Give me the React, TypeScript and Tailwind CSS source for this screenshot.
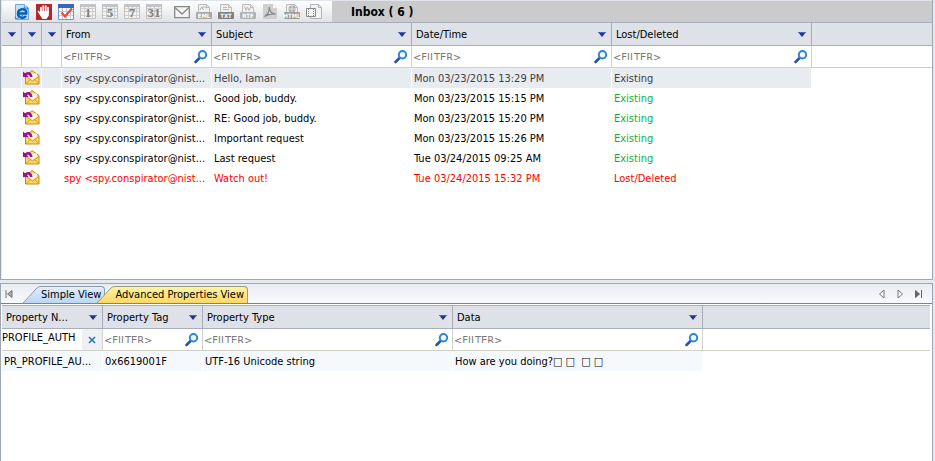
import type { ReactNode } from "react";

type Mail = { subject: string; date: string; status: string; tone: string; selected?: boolean };

const FROM = "spy <spy.conspirator@nist...";

const mails: Mail[] = [
  { subject: "Hello, Iaman", date: "Mon 03/23/2015 13:29 PM", status: "Existing", tone: "text-[#404040]", selected: true },
  { subject: "Good job, buddy.", date: "Mon 03/23/2015 15:15 PM", status: "Existing", tone: "text-[#10b040]" },
  { subject: "RE: Good job, buddy.", date: "Mon 03/23/2015 15:20 PM", status: "Existing", tone: "text-[#10b040]" },
  { subject: "Important request", date: "Mon 03/23/2015 15:26 PM", status: "Existing", tone: "text-[#10b040]" },
  { subject: "Last request", date: "Tue 03/24/2015 09:25 AM", status: "Existing", tone: "text-[#10b040]" },
  { subject: "Watch out!", date: "Tue 03/24/2015 15:32 PM", status: "Lost/Deleted", tone: "text-[#ff0000]" },
];

function Icon({ children }: { children: ReactNode }) {
  return (
    <svg viewBox="0 0 16 16" className="block size-4" aria-hidden="true">
      {children}
    </svg>
  );
}

function Calendar({ day }: { day: string }) {
  return (
    <Icon>
      <path d="M.5.5h15v14H.5z" fill="#f3f3f3" stroke="#c0c0c0" />
      <path d="M1 4.500h14M1 7.500h14M1 11.500h14M4.500 1v14M8.500 1v14M12.500 1v14" stroke="#cfcfcf" />
      <path d="M0 0h16v3H0z" fill="#c4c4c4" />
      <text x="8" y="13" textAnchor="middle" fontSize="13" fontWeight="700" fontFamily="Liberation Serif, serif" fill="#808080">
        {day}
      </text>
    </Icon>
  );
}

function FileIcon({ tag, fill, children }: { tag: string; fill: string; children?: ReactNode }) {
  return (
    <Icon>
      <path d="M2.500 9V.5h8l3 3V9" fill="#f0f0f0" stroke="#bdbdbd" />
      <path d="M10.500.5v3h3" fill="none" stroke="#bdbdbd" />
      {children}
      <rect y="8" width="16" height="7" rx="1" fill={fill} />
      <text x="8" y="14" textAnchor="middle" fontSize="6" fontWeight="700" fontFamily="DejaVu Sans Condensed, sans-serif" fill="#fff">
        {tag}
      </text>
    </Icon>
  );
}

function Tool({ label, children }: { label: string; children: ReactNode }) {
  return (
    <button type="button" aria-label={label} className="size-4">
      {children}
    </button>
  );
}

function Arrow() {
  return (
    <svg viewBox="0 0 8 5" className="block h-[5px] w-2 shrink-0" aria-hidden="true">
      <path d="M0 0h8L4 5z" fill="#26357f" />
      <path d="M0 0h8L7 1H1z" fill="#4a63c4" />
    </svg>
  );
}

function Magnifier() {
  return (
    <svg viewBox="0 0 14 14" className="block size-[14px]" aria-hidden="true">
      <path d="M5.500 8 1.500 12" stroke="#2b50a8" strokeWidth="2.500" strokeLinecap="round" />
      <circle cx="8.500" cy="4.700" r="3.700" fill="#eef8ff" stroke="#2f86cf" strokeWidth="2" />
    </svg>
  );
}

function MailIcon() {
  return (
    <svg viewBox="0 0 17 16" className="block h-4 w-[17px]" aria-hidden="true">
      <path d="M2.500 5.500 9 .7l7 4.800v8.500H2.500z" fill="#fbd766" stroke="#c98a1c" />
      <path d="M5 3.500h9v3.500l-4.500 3L5 7z" fill="#fff8dc" />
      <path d="m3 6.500 6.500 4.500L16 6.500M3 13.500l4.500-4M16 13.500l-4.500-4" fill="none" stroke="#d99a28" />
      <path d="M0 1.500v5.500h5.500L3.700 5C5 3.800 6.500 4.500 7 7h2.500C9.500 2.500 5.500.3 2 3.300z" fill="#a0108c" />
    </svg>
  );
}

function HeadCell({ label, children }: { label: string; children?: ReactNode }) {
  return (
    <th scope="col" className="h-6 border-y border-r border-[#a9aeb8] bg-[#dee1e7] p-0 text-left font-normal">
      <div className={children ? "flex items-center justify-between pr-[5px] pl-1" : "flex items-center justify-center"}>
        {children && <span className="pt-[2px]">{children}</span>}
        <button type="button" aria-label={"Sort by " + label}>
          <Arrow />
        </button>
      </div>
    </th>
  );
}

function FilterCell({ label }: { label: string }) {
  return (
    <td className="h-[22px] border-r border-b border-[#d3d0c8] p-0">
      <div className="flex h-[21px] items-start justify-between pt-1 pr-[3px] pl-px">
        <div className="h-[10px] min-w-0 flex-1 overflow-hidden pt-px">
          <input
            aria-label={"Filter " + label}
            placeholder="<FILTER>"
            className="block h-[14px] w-full bg-transparent p-0 leading-[14px] outline-none placeholder:text-[#777777]"
          />
        </div>
        <button type="button" aria-label={"Search " + label}>
          <Magnifier />
        </button>
      </div>
    </td>
  );
}

const EMPTY_HEAD = "h-6 border-y border-[#a9aeb8] bg-[#dee1e7] p-0";
const EMPTY_FILTER = "h-[22px] border-b border-[#d3d0c8] p-0";

function Toolbar() {
  return (
    <header className="flex h-[21px] items-center bg-linear-to-b from-white to-[#e0e2e7]">
      <div className="flex h-full w-[330px] shrink-0 items-center gap-3 pl-3">
        <div className="flex gap-[6px]">
          <Tool label="Open in browser">
            <Icon>
              <path d="M1.500.5h9l4 4v11h-13z" fill="#c4e0f6" stroke="#6fa8d8" />
              <path d="M10.500.5v4h4" fill="#fff" stroke="#6fa8d8" />
              <path d="M12 12C9.500 15 4 14 4 9.500S10 4 12 7c.5 1 .5 2 .3 2.500H5" fill="none" stroke="#0b5cb5" strokeWidth="2.400" />
              <path d="M1.500 12.500C0 16 5 14.500 9 11M9 4.500C12 2.500 15 2 13.500 5.500" fill="none" stroke="#1a86d8" />
            </Icon>
          </Tool>
          <Tool label="Stop">
            <Icon>
              <path d="M0 0h16v16H0z" fill="#b3282c" />
              <path d="M5 9V3.500M7.300 8V2M9.700 8V2M12 9V3.500M2.500 7.500 5 11" stroke="#fff" strokeWidth="1.700" strokeLinecap="round" />
              <path d="M4.200 7h8.600v4.500L10.500 15h-4l-2.300-3.500z" fill="#fff" />
            </Icon>
          </Tool>
          <Tool label="All dates">
            <Icon>
              <path d="M.5.5h15v15H.5z" fill="#fff" stroke="#7292d0" />
              <path d="M0 0h16v4H0z" fill="#3c66b8" />
              <path d="M1 7.500h14M1 11.500h14M4.500 4v11M8.500 4v11M12.500 4v11" stroke="#b9c9e8" />
              <path d="m3.500 8.500 3.500 4 7-8" fill="none" stroke="#e9502c" strokeWidth="2.400" />
            </Icon>
          </Tool>
          <Tool label="One day"><Calendar day="1" /></Tool>
          <Tool label="Five days"><Calendar day="5" /></Tool>
          <Tool label="Seven days"><Calendar day="7" /></Tool>
          <Tool label="Month"><Calendar day="31" /></Tool>
        </div>
        <div className="flex gap-[6px]">
          <Tool label="Message">
            <Icon>
              <path d="M.7 2.700h14.600v11H.7z" fill="#f4f4f4" stroke="#888" strokeWidth="1.300" />
              <path d="m1 3.500 7 6.500 7-6.500" fill="none" stroke="#888" strokeWidth="1.300" />
            </Icon>
          </Tool>
          <Tool label="Export EML">
            <FileIcon tag="EML" fill="#a9a9a9"><path d="M4 6c1-3 4-4 7-2M5 3l3 3" fill="none" stroke="#b0b0b0" /></FileIcon>
          </Tool>
          <Tool label="Export TXT">
            <FileIcon tag="TXT" fill="#7f7f7f"><path d="M5 3.500h4M5 5.500h6" stroke="#b8b8b8" /></FileIcon>
          </Tool>
          <Tool label="Export RTF">
            <FileIcon tag="RTF" fill="#b2b2b2"><path d="m4.500 2.500 1.500 4L7.500 3 9 6.500l1.500-3" fill="none" stroke="#b8b8b8" /></FileIcon>
          </Tool>
          <Tool label="Export PDF">
            <Icon>
              <path d="M1 0h10l4 4v11H1z" fill="#cfcfcf" />
              <path d="M11 0v4h4z" fill="#f6f6f6" />
              <path d="M2.500 12.500C6 10.500 7.700 7 7.200 3c.3 4 2.500 7 6.300 7-4-.5-8 .5-11 2.500z" fill="#eee" stroke="#858585" strokeWidth="1.300" />
            </Icon>
          </Tool>
          <Tool label="Export HTML">
            <FileIcon tag="HTML" fill="#9b9b9b"><circle cx="8" cy="5" r="3.500" fill="#aaa" /><path d="M5 5h6M8 2v6" stroke="#e4e4e4" /></FileIcon>
          </Tool>
          <Tool label="Export other">
            <Icon>
              <path d="M4.500 4V.5h8l3 3v11h-11V12" fill="#f2f2f2" stroke="#b4b4b4" />
              <path d="M12.500.5v3h3" fill="none" stroke="#b4b4b4" />
              <path d="M.5 4.500h9v8h-9z" fill="#f6f6f6" stroke="#8a8a8a" />
              <path d="M2.500 5v7M7.500 5v7" stroke="#8a8a8a" strokeDasharray="1 1" />
            </Icon>
          </Tool>
        </div>
      </div>
      <h1 className="flex h-full flex-1 items-center bg-[#cbcbcb] pl-[19px] text-[12px] font-bold">Inbox ( 6 )</h1>
    </header>
  );
}

function MessageTable() {
  const cell = "h-5 truncate border-r border-white pt-[2px] pr-0 pb-0 pl-[2px]";
  return (
    <table className="w-full table-fixed border-separate border-spacing-0">
      <colgroup>
        <col className="w-5" />
        <col className="w-5" />
        <col className="w-5" />
        <col className="w-[150px]" />
        <col className="w-[200px]" />
        <col className="w-[200px]" />
        <col className="w-[200px]" />
        <col />
      </colgroup>
      <thead>
        <tr>
          <HeadCell label="flag" />
          <HeadCell label="type" />
          <HeadCell label="attachment" />
          <HeadCell label="From">From</HeadCell>
          <HeadCell label="Subject">Subject</HeadCell>
          <HeadCell label="Date/Time">Date/Time</HeadCell>
          <HeadCell label="Lost/Deleted">Lost/Deleted</HeadCell>
          <td className={EMPTY_HEAD} />
        </tr>
      </thead>
      <tbody>
        <tr>
          <td className="h-[22px] border-r border-b border-[#d3d0c8] p-0" />
          <td className="h-[22px] border-r border-b border-[#d3d0c8] p-0" />
          <td className="h-[22px] border-r border-b border-[#d3d0c8] p-0" />
          <FilterCell label="From" />
          <FilterCell label="Subject" />
          <FilterCell label="Date/Time" />
          <FilterCell label="Lost/Deleted" />
          <td className={EMPTY_FILTER} />
        </tr>
        {mails.map((m) => {
          const bg = m.selected ? " bg-[#e8ebf0]" : "";
          const red = m.status === "Lost/Deleted";
          const text = m.selected ? " text-[#404040]" : red ? " text-[#ff0000]" : " text-black";
          return (
            <tr key={m.date}>
              <td className={"h-5 border-r border-white p-0" + bg} />
              <td className={"h-5 border-r border-white py-0 pr-0 pl-px" + bg}><MailIcon /></td>
              <td className={"h-5 border-r border-white p-0" + bg} />
              <td className={cell + bg + text}>{FROM}</td>
              <td className={cell + bg + text}>{m.subject}</td>
              <td className={cell + bg + text}>{m.date}</td>
              <td className={cell + bg + " " + m.tone}>{m.status}</td>
              <td className="p-0" />
            </tr>
          );
        })}
      </tbody>
    </table>
  );
}

function Tabs() {
  return (
    <nav className="flex h-[19px] items-end bg-linear-to-b from-[#e9ecf1] to-[#f9fafc]">
      <button type="button" aria-label="First" className="mr-[10px] ml-1 self-center">
        <svg viewBox="0 0 8 8" className="block size-2"><path d="M1 0v8" stroke="#777" /><path d="M7 .5v7L2.500 4z" fill="#aaa" stroke="#777" /></svg>
      </button>
      <button type="button" className="flex h-[17px]">
        <svg viewBox="0 0 18 17" className="block h-[17px] w-[18px]">
          <defs>
            <linearGradient id="blueTab" x1="0" y1="0" x2="0" y2="1">
              <stop offset="0" stopColor="#e2eefb" />
              <stop offset="1" stopColor="#bdd6f2" />
            </linearGradient>
          </defs>
          <path d="M0 17 14 2Q15.500.5 18 .5V17z" fill="url(#blueTab)" />
          <path d="M0 17 14 2Q15.500.5 18 .5" fill="none" stroke="#8a98ac" />
        </svg>
        <span className="flex h-full items-center rounded-tr-sm border-t border-r border-[#8a98ac] bg-linear-to-b from-[#e2eefb] to-[#bdd6f2] pr-[3px]">Simple View</span>
      </button>
      <button type="button" className="-ml-2 flex h-[17px]">
        <svg viewBox="0 0 18 17" className="block h-[17px] w-[18px]">
          <defs>
            <linearGradient id="goldTab" x1="0" y1="0" x2="0" y2="1">
              <stop offset="0" stopColor="#fff3a0" />
              <stop offset="1" stopColor="#fdd868" />
            </linearGradient>
          </defs>
          <path d="M0 17 14 2Q15.500.5 18 .5V17z" fill="url(#goldTab)" />
          <path d="M0 17 14 2Q15.500.5 18 .5" fill="none" stroke="#9a9a88" />
        </svg>
        <span className="flex h-full items-center rounded-tr-sm border-t border-r border-[#9a9a88] bg-linear-to-b from-[#fff3a0] to-[#fdd868] pr-[3px]">Advanced Properties View</span>
      </button>
      <div className="mr-[10px] ml-auto flex gap-[10px] self-center">
        <button type="button" aria-label="Previous"><svg viewBox="0 0 8 8" className="block size-2"><path d="M6 0v8L1.500 4z" fill="#fff" stroke="#777" /></svg></button>
        <button type="button" aria-label="Next"><svg viewBox="0 0 8 8" className="block size-2"><path d="M2 0v8l4.500-4z" fill="#fff" stroke="#777" /></svg></button>
        <button type="button" aria-label="Last"><svg viewBox="0 0 8 8" className="block size-2"><path d="M1.500.5v7L5.500 4z" fill="#666" stroke="#666" /><path d="M7.500 0v8" stroke="#666" /></svg></button>
      </div>
    </nav>
  );
}

function PropertyTable() {
  const cell = "h-5 truncate border-r border-white bg-[#f5f9fd] pt-[2px] pr-0 pb-0 pl-[2px]";
  return (
    <table className="w-full table-fixed border-separate border-spacing-0">
      <colgroup>
        <col className="w-[101px]" />
        <col className="w-[100px]" />
        <col className="w-[250px]" />
        <col className="w-[250px]" />
        <col />
      </colgroup>
      <thead>
        <tr>
          <HeadCell label="Property Name">Property N...</HeadCell>
          <HeadCell label="Property Tag">Property Tag</HeadCell>
          <HeadCell label="Property Type">Property Type</HeadCell>
          <HeadCell label="Data">Data</HeadCell>
          <td className={EMPTY_HEAD} />
        </tr>
      </thead>
      <tbody>
        <tr>
          <td className="h-[22px] border-r border-b border-[#d3d0c8] p-0">
            <div className="flex h-[21px] items-stretch">
              <input aria-label="Filter Property Name" defaultValue="PROFILE_AUTH" className="h-4 min-w-0 flex-1 bg-transparent p-0 outline-none" />
              <button type="button" aria-label="Clear filter" className="flex w-5 items-center justify-center bg-[#edf1f6]">
                <svg viewBox="0 0 8 8" className="block size-2"><path d="m1 1 6 6M7 1 1 7" stroke="#2f72b8" strokeWidth="1.600" /></svg>
              </button>
            </div>
          </td>
          <FilterCell label="Property Tag" />
          <FilterCell label="Property Type" />
          <FilterCell label="Data" />
          <td className={EMPTY_FILTER} />
        </tr>
        <tr>
          <td className={cell}>PR_PROFILE_AU...</td>
          <td className={cell}>0x6619001F</td>
          <td className={cell}>UTF-16 Unicode string</td>
          <td className={cell}>How are you doing?□ □&nbsp; □ □</td>
          <td className="p-0" />
        </tr>
      </tbody>
    </table>
  );
}

export default function App() {
  return (
    <main className="grid h-screen grid-rows-[280fr_181fr] bg-[#e6eaf0] pr-[2px] font-['DejaVu_Sans_Condensed','DejaVu_Sans',sans-serif] text-[11px] leading-[14px] text-black">
      <section className="min-h-0 overflow-hidden border-x border-b border-[#9ea6b4] bg-white">
        <div className="h-full border-t border-l border-[#e1e5eb]">
          <Toolbar />
          <MessageTable />
        </div>
      </section>
      <section className="min-h-0 overflow-hidden pt-[3px]">
        <div className="h-full border-x border-t border-[#9ea6b4] bg-white">
          <Tabs />
          <div className="border-t border-[#7d828e] pt-px pr-[2px] pl-px">
            <PropertyTable />
          </div>
        </div>
      </section>
    </main>
  );
}
